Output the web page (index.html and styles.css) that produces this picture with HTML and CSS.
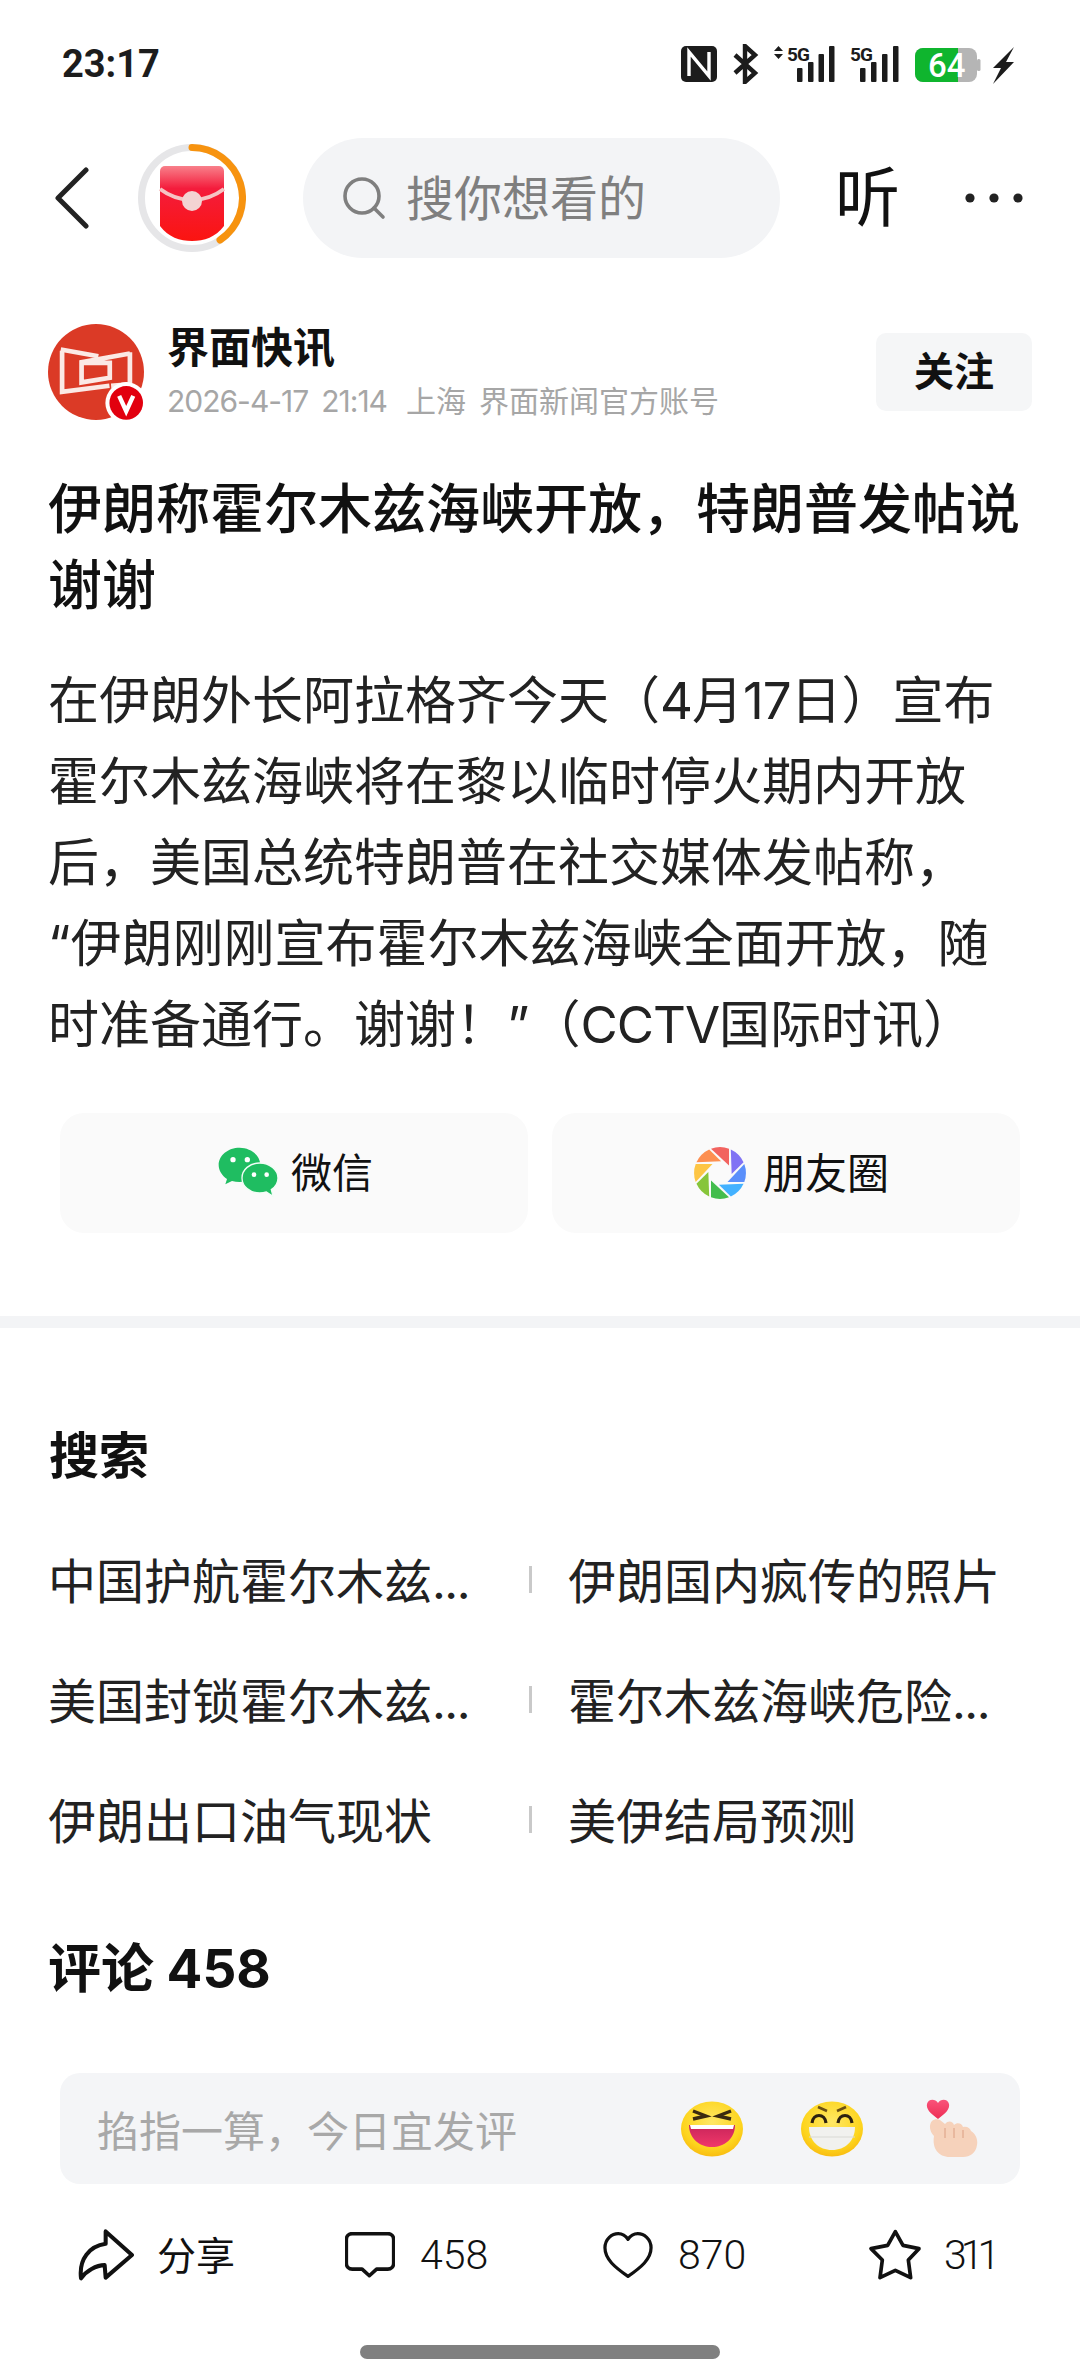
FILE: index.html
```html
<!DOCTYPE html>
<html lang="zh-CN">
<head>
<meta charset="utf-8">
<title>界面快讯</title>
<link rel="stylesheet" href="styles.css">
</head>
<body>
<div class="page">
  <header class="status">
    <span class="time">23:17</span>
    <svg class="status-icons" width="340" height="40" viewBox="680 44 340 40">
      <rect x="681" y="46" width="36" height="36" rx="5" fill="#1c1c1c"/>
      <path d="M689 76V52L709 76V52" fill="none" stroke="#fff" stroke-width="3.4"/>
      <path d="M735 55L755 73L745 82V46L755 55L735 73" fill="none" stroke="#1c1c1c" stroke-width="4.4"/>
      <path d="M774 51l4.5-5 4.5 5zM774 54l4.5 5 4.5-5z" fill="#1c1c1c"/>
      <text x="787" y="61" class="net">5G</text>
      <g fill="#1c1c1c">
        <rect x="797" y="68" width="5.5" height="14" rx="1"/><rect x="808" y="62" width="5.5" height="20" rx="1"/><rect x="818.500" y="54" width="5.5" height="28" rx="1"/><rect x="829" y="46" width="5.500" height="36" rx="1"/>
      </g>
      <text x="850" y="61" class="net">5G</text>
      <g fill="#1c1c1c">
        <rect x="860" y="68" width="5.5" height="14" rx="1"/><rect x="871" y="62" width="5.5" height="20" rx="1"/><rect x="882" y="54" width="5.5" height="28" rx="1"/><rect x="893" y="46" width="5.5" height="36" rx="1"/>
      </g>
      <rect x="915" y="48" width="62" height="34" rx="8" fill="#b5b5b5"/>
      <path d="M958 48H923a8 8 0 0 0-8 8v18a8 8 0 0 0 8 8h35z" fill="#0fb52e"/>
      <rect x="977" y="59" width="3.5" height="12" rx="1.5" fill="#b5b5b5"/>
      <text x="928" y="77" class="batt">64</text>
      <path d="M1014 47L993 68h8l-8 16 21-22h-8z" fill="#1c1c1c"/>
    </svg>
  </header>

  <nav class="nav">
    <svg class="back" width="34" height="62" viewBox="0 0 34 62"><path d="M31 3L3 31l28 28" fill="none" stroke="#222" stroke-width="5" stroke-linecap="round" stroke-linejoin="round"/></svg>
    <svg class="ring" width="108" height="108" viewBox="0 0 108 108">
      <defs>
        <linearGradient id="pkt" x1="0" y1="0" x2="0" y2="1"><stop offset="0" stop-color="#f8808a"/><stop offset=".3" stop-color="#f41c3c"/><stop offset="1" stop-color="#fb1410"/></linearGradient>
      </defs>
      <circle cx="54" cy="54" r="50.5" fill="none" stroke="#e6e6e8" stroke-width="7"/>
      <path d="M54 3.500A50.500 50.500 0 0 1 82 96" fill="none" stroke="#f7930f" stroke-width="7" stroke-linecap="round"/>
      <path d="M27 22H81a5 5 0 0 1 5 5V82C78 93 66 97 54 97S30 93 22 82V27a5 5 0 0 1 5-5z" fill="url(#pkt)"/>
      <path d="M22 45C34 54 44 56 54 56s20-2 32-11" fill="none" stroke="#f5c4c4" stroke-width="4"/>
      <circle cx="54" cy="57" r="10" fill="#f3d3d3"/>
    </svg>
    <div class="search">
      <svg width="44" height="44" viewBox="0 0 44 44"><circle cx="20" cy="20" r="17" fill="none" stroke="#7f7f7f" stroke-width="3.6"/><path d="M32 32l9 9" stroke="#7f7f7f" stroke-width="3.6" stroke-linecap="round"/></svg>
      <span class="lift">搜你想看的</span>
    </div>
    <span class="listen">听</span>
    <svg class="dots" width="60" height="12" viewBox="0 0 60 12"><circle cx="6" cy="6" r="4.6" fill="#222"/><circle cx="30" cy="6" r="4.6" fill="#222"/><circle cx="54" cy="6" r="4.6" fill="#222"/></svg>
  </nav>

  <section class="author">
    <svg class="avatar" width="96" height="96" viewBox="12 12 286 286">
      <circle cx="155" cy="155" r="143" fill="#db3a26"/>
      <g fill="none" stroke="#fbe9e5" stroke-width="14">
        <path d="M54 92V214L195 196"/>
        <path d="M50 88L162 108"/>
        <path d="M256 100L112 126V186L196 172V128L116 128"/>
        <path d="M256 96V192L200 196"/>
      </g>
      <circle cx="245" cy="247" r="62" fill="#fff"/>
      <circle cx="245" cy="247" r="50" fill="#e2000f"/>
      <path d="M224 226L245 272L266 226" fill="none" stroke="#fff" stroke-width="13"/>
    </svg>
    <div class="author-text">
      <div class="author-name">界面快讯</div>
      <div class="author-meta"><span class="latin">2026-4-17</span><span class="latin">21:14</span><span class="place">上海</span><span>界面新闻官方账号</span></div>
    </div>
    <button class="follow">关注</button>
  </section>

  <h1 class="title">伊朗称霍尔木兹海峡开放，特朗普发帖说<br>谢谢</h1>
  <p class="body">在伊朗外长阿拉格齐今天（<span class="nar">4</span>月<span class="nar">17</span>日）宣布<br>霍尔木兹海峡将在黎以临时停火期内开放<br>后，美国总统特朗普在社交媒体发帖称，<br>“伊朗刚刚宣布霍尔木兹海峡全面开放，随<br>时准备通行。谢谢！”（<span class="nar">CCTV</span>国际时讯）</p>

  <div class="shares">
    <div class="share-btn wx">
      <svg width="62" height="54" viewBox="20 48 186 156">
        <path d="M85 50C50 50 22 73 22 102c0 17 10 32 25 42l-5 16 20-10c7 2 15 3 23 3 34 0 62-23 62-51S119 50 85 50z" fill="#1fbd61"/>
        <path d="M145 96c-30 0-53 20-53 45s23 45 53 45c7 0 14-1 20-3l20 13-5-20c12-8 20-21 20-35 0-25-25-45-55-45z" fill="#1fbd61" stroke="#f2fdf6" stroke-width="4"/>
        <circle cx="65" cy="86" r="8" fill="#fff"/><circle cx="108" cy="86" r="8" fill="#fff"/>
        <circle cx="128" cy="131" r="7" fill="#fff"/><circle cx="166" cy="131" r="7" fill="#fff"/>
      </svg>
      <span class="lift">微信</span>
    </div>
    <div class="share-btn moments">
      <svg width="54" height="54" viewBox="-27 -27 54 54">
        <defs><path id="blade" d="M-9-24.3A26 26 0 0 1 9-24.3V-7.5Z"/></defs>
        <use href="#blade" fill="#f2635f"/>
        <use href="#blade" fill="#8173f4" transform="rotate(45)"/>
        <use href="#blade" fill="#5a8ffb" transform="rotate(90)"/>
        <use href="#blade" fill="#42b1ff" transform="rotate(135)"/>
        <use href="#blade" fill="#43bd4d" transform="rotate(180)"/>
        <use href="#blade" fill="#87c53a" transform="rotate(225)"/>
        <use href="#blade" fill="#fdc544" transform="rotate(270)"/>
        <use href="#blade" fill="#fd8f50" transform="rotate(315)"/>
      </svg>
      <span class="lift">朋友圈</span>
    </div>
  </div>

  <div class="divider"></div>

  <h2 class="section-title">搜索</h2>
  <div class="suggest">
    <div class="sg-row"><span class="sg-left">中国护航霍尔木兹<b class="more">...</b></span><i class="sg-sep"></i><span class="sg-right">伊朗国内疯传的照片</span></div>
    <div class="sg-row"><span class="sg-left">美国封锁霍尔木兹<b class="more">...</b></span><i class="sg-sep"></i><span class="sg-right">霍尔木兹海峡危险<b class="more">...</b></span></div>
    <div class="sg-row"><span class="sg-left">伊朗出口油气现状</span><i class="sg-sep"></i><span class="sg-right">美伊结局预测</span></div>
  </div>

  <h2 class="comments-title">评论 458</h2>

  <div class="comment-box">
    <span class="placeholder">掐指一算，今日宜发评</span>
    <div class="emojis">
      <svg width="64" height="56" viewBox="0 0 64 56">
        <defs>
          <radialGradient id="face" cx=".5" cy=".38" r=".62"><stop offset="0" stop-color="#ffe866"/><stop offset=".75" stop-color="#fdd51e"/><stop offset="1" stop-color="#f9bd12"/></radialGradient>
          <linearGradient id="mouth" x1="0" y1="0" x2="0" y2="1"><stop offset="0" stop-color="#c9245a"/><stop offset="1" stop-color="#f0386a"/></linearGradient>
        </defs>
        <ellipse cx="32" cy="28" rx="31" ry="27.5" fill="url(#face)"/>
        <path d="M9 24H55C55 38 44 46 32 46S9 38 9 24Z" fill="url(#mouth)"/>
        <path d="M10 24H54L53 28H11Z" fill="#fff"/>
        <path d="M13 10L26 15L13 18" fill="none" stroke="#3b2a10" stroke-width="3.4"/>
        <path d="M51 10L38 15L51 18" fill="none" stroke="#3b2a10" stroke-width="3.4"/>
      </svg>
      <svg width="64" height="56" viewBox="0 0 64 56">
        <ellipse cx="32" cy="28" rx="31" ry="27.5" fill="url(#face)"/>
        <path d="M9 26H55C55 40 45 49 32 49S9 40 9 26Z" fill="#f1f1ee"/>
        <path d="M9 36H55" stroke="#d9d9d4" stroke-width="1"/>
        <path d="M12 22C13 12 25 12 26 22" fill="none" stroke="#2d2110" stroke-width="3.2"/>
        <path d="M38 22C39 12 51 12 52 22" fill="none" stroke="#2d2110" stroke-width="3.2"/>
        <path d="M18 6L27 10M46 6L37 10" fill="none" stroke="#6b5013" stroke-width="2.6"/>
      </svg>
      <svg class="hand" width="52" height="62" viewBox="0 0 52 62">
        <defs><linearGradient id="heart" x1="0" y1="0" x2="0" y2="1"><stop offset="0" stop-color="#f9537a"/><stop offset="1" stop-color="#ee2d55"/></linearGradient></defs>
        <path d="M12 21C4 15 0 11 1 6c1-5 8-6 11-1 3-5 10-4 11 1 1 5-3 9-11 15z" fill="url(#heart)"/>
        <path d="M6 23c2-2 6-2 8-1l5 4c3-4 8-3 9 1 3-3 8-2 9 2 4-1 7 1 8 4 5 3 7 9 6 14-1 8-7 12-14 12H24C12 59 6 50 8 38 3 33 3 26 6 23z" fill="#f6d2bb"/>
        <path d="M19 30v10M28 30v10M37 32v8" stroke="#e5b298" stroke-width="1.6" fill="none"/>
      </svg>
    </div>
  </div>

  <div class="actions">
    <div class="action a-share">
      <svg width="56" height="52" viewBox="26 12 166 152"><path d="M108 18L186 88 108 155 105 118C80 118 50 135 35 157 28 100 60 62 108 55Z" fill="none" stroke="#111" stroke-width="12" stroke-linejoin="round"/></svg>
      <span class="cn">分享</span>
    </div>
    <div class="action a-comment">
      <svg width="50" height="46" viewBox="824 28 152 138"><path d="M846 32H954A18 18 0 0 1 972 50V122A18 18 0 0 1 954 140H920L898 160 876 140H846A18 18 0 0 1 828 122V50A18 18 0 0 1 846 32Z" fill="none" stroke="#111" stroke-width="11" stroke-linejoin="round"/></svg>
      <span>458</span>
    </div>
    <div class="action a-like">
      <svg width="50" height="48" viewBox="38 20 154 144"><path d="M115 158C75 130 44 105 44 70 44 42 66 26 85 26 98 26 108 33 115 44 122 33 132 26 145 26 164 26 186 42 186 70 186 105 155 130 115 158Z" fill="none" stroke="#111" stroke-width="10" stroke-linejoin="round"/></svg>
      <span>870</span>
    </div>
    <div class="action a-fav">
      <svg width="54" height="52" viewBox="832 6 160 156"><path d="M913 14L936 55 984 65 952 99 959 152 913 130 867 152 874 99 840 65 890 55Z" fill="none" stroke="#111" stroke-width="11" stroke-linejoin="round"/></svg>
      <span class="tight">311</span>
    </div>
  </div>

  <div class="home"></div>
</div>
</body>
</html>
```

FILE: styles.css
```css
* { box-sizing: border-box; }
html, body { margin: 0; padding: 0; background: #fff; }
.page {
  width: 1080px;
  height: 2376px;
  overflow: hidden;
  font-family: Inter, "Noto Sans CJK SC", sans-serif;
  color: #1a1a1a;
  text-spacing-trim: space-all;
}
.lift { padding-bottom: 6px; }
.status {
  height: 84px;
  padding: 44px 60px 0 62px;
  display: flex;
  justify-content: space-between;
  align-items: flex-start;
}
.time { font: 700 38px/38px Roboto, sans-serif; color: #1c1c1c; margin-top: 1px; }
.status-icons { display: block; }
.net { font: 700 19px Roboto, sans-serif; fill: #1c1c1c; letter-spacing: -1px; }
.batt { font: 500 33px Roboto, sans-serif; fill: #fff; }

.nav {
  height: 120px;
  margin-top: 54px;
  padding-left: 55px;
  display: flex;
  align-items: center;
}
.back { margin-right: 49px; }
.ring { margin-right: 57px; }
.search {
  width: 477px;
  height: 120px;
  border-radius: 60px;
  background: #f3f4f6;
  padding-left: 39px;
  display: flex;
  align-items: center;
  gap: 20px;
  font-size: 48px;
  color: #7f7f7f;
}
.listen { margin-left: 55px; font-size: 65px; line-height: 70px; color: #111; }
.dots { margin-left: 64px; }

.author {
  margin-top: 66px;
  padding: 0 48px;
  display: flex;
  align-items: center;
  height: 96px;
}
.avatar { flex: none; }
.author-text { margin-left: 23px; flex: 1; }
.author-name { font-size: 42px; line-height: 50px; font-weight: 700; color: #111; }
.author-meta {
  display: flex;
  gap: 13px;
  font-size: 30px;
  line-height: 40px;
  color: #a6a6a6;
  margin-top: 8px;
  white-space: nowrap;
}
.latin { letter-spacing: -1px; }
.place { margin-left: 6px; }
.follow {
  width: 156px;
  height: 78px;
  border: 0;
  border-radius: 10px;
  background: #f5f6f7;
  font: 700 40px "Noto Sans CJK SC", sans-serif;
  color: #111;
  padding: 0 0 6px;
}

.title {
  margin: 52px 48px 0;
  font-size: 54px;
  line-height: 76px;
  font-weight: 500;
  color: #111;
  white-space: nowrap;
}
.body {
  margin: 36px 48px 0;
  font-size: 51px;
  line-height: 81px;
  color: #222;
  white-space: nowrap;
}
.nar { letter-spacing: -1px; }
.shares {
  margin-top: 48px;
  padding: 0 60px;
  display: flex;
  gap: 24px;
}
.share-btn {
  flex: none;
  width: 468px;
  height: 120px;
  border-radius: 24px;
  background: #fafafa;
  display: flex;
  align-items: center;
  justify-content: center;
  font-size: 41px;
  color: #111;
}
.wx { gap: 11px; padding-left: 3px; }
.moments { gap: 16px; padding-left: 10px; font-size: 42px; }
.divider { height: 12px; margin-top: 83px; background: #f3f4f6; }
.section-title {
  margin: 98px 48px 0 49px;
  font-size: 50px;
  line-height: 60px;
  font-weight: 700;
  color: #111;
}
.suggest { margin-top: 32px; }
.sg-row {
  height: 120px;
  display: flex;
  align-items: center;
  font-size: 48px;
  color: #222;
}
.more { font-weight: 400; letter-spacing: -1.5px; }
.sg-left { width: 529px; padding-left: 48px; }
.sg-sep { width: 3px; height: 27px; background: #c9c9c9; margin-top: 3px; }
.sg-right { padding-left: 36px; }
.comments-title {
  margin: 57px 48px 0;
  font-size: 53px;
  line-height: 68px;
  font-weight: 700;
  color: #111;
}
.comment-box {
  margin: 70px 60px 0;
  height: 111px;
  border-radius: 20px;
  background: #f4f5f7;
  display: flex;
  align-items: center;
  justify-content: space-between;
  padding: 0 42px 0 37px;
}
.placeholder { font-size: 42px; color: #a8a8a8; }
.emojis { display: flex; align-items: center; gap: 56px; }
.emojis svg { display: block; }
.hand { margin-left: 6px; }

.actions {
  margin-top: 21px;
  height: 100px;
  padding-left: 78px;
  display: grid;
  grid-template-columns: 267px 258px 265px auto;
  align-items: center;
  font: 300 41px Roboto, sans-serif;
  color: #111;
}
.action { display: flex; align-items: center; gap: 25px; }
.action svg { display: block; }
.a-share { gap: 23px; }
.a-fav { gap: 22px; }
.cn { font: 400 39px "Noto Sans CJK SC", sans-serif; padding-bottom: 4px; }
.tight { letter-spacing: -6px; }
.home {
  margin: 40px auto 0;
  width: 360px;
  height: 14px;
  border-radius: 7px;
  background: #808080;
}
```
